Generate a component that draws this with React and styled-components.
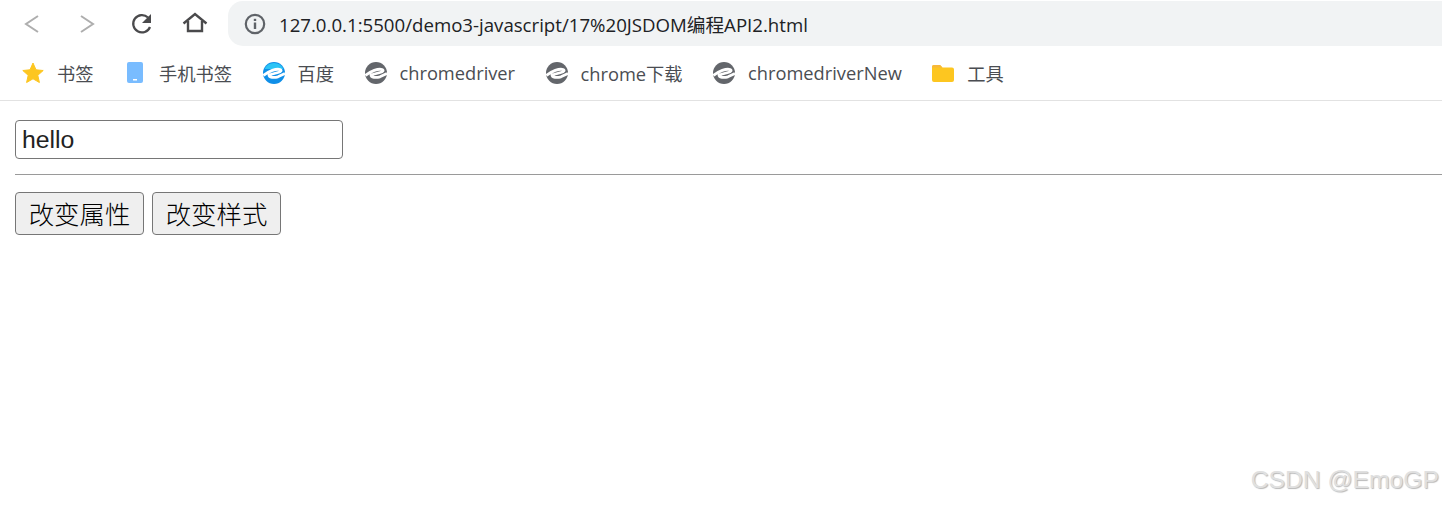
import React from "react";
import styled, { createGlobalStyle } from "styled-components";

const GlobalStyle = createGlobalStyle`
  html, body {
    margin: 0;
    padding: 0;
    background: #fff;
    overflow: hidden;
  }
`;

const Window = styled.div`
  width: 1442px;
  height: 506px;
  position: relative;
  overflow: hidden;
  background: #fff;
  display: flex;
  flex-direction: column;
`;

const Toolbar = styled.div`
  height: 46px;
  margin-top: 1px;
  display: flex;
  align-items: flex-start;
`;

const NavButtons = styled.div`
  width: 228px;
  height: 46px;
  flex-shrink: 0;
  display: flex;
  align-items: center;
`;

const NavIcon = styled.svg`
  width: 28px;
  height: 28px;
  margin-left: ${(p) => p.$left}px;
  flex-shrink: 0;
  fill: none;
  stroke: ${(p) => (p.$off ? "#aeaeae" : "#4a4a4c")};
  stroke-width: 2.4;
`;

const AddressBar = styled.div`
  flex: 1;
  height: 45px;
  background: #f1f3f4;
  border-radius: 15px 0 0 15px;
  display: flex;
  align-items: center;
  padding-left: 16px;
  gap: 13px;
`;

const Url = styled.span`
  font-family: "Open Sans", "Noto Sans CJK SC", sans-serif;
  font-size: 18.65px;
  color: #202124;
  white-space: nowrap;
`;

const BookmarkBar = styled.div`
  height: 54px;
  box-sizing: border-box;
  border-bottom: 1px solid #e2e2e2;
  display: flex;
  align-items: center;
  padding: 0 0 2px 22px;
  gap: 30.5px;
`;

const Bookmark = styled.div`
  display: flex;
  align-items: center;
  gap: 13px;
`;

const BookmarkIcon = styled.svg`
  width: 22px;
  height: 22px;
  flex-shrink: 0;
`;

const BookmarkLabel = styled.span`
  font-family: "Open Sans", "Noto Sans CJK SC", sans-serif;
  font-size: 18.25px;
  color: #4a4d52;
  white-space: nowrap;
`;

const Content = styled.div`
  padding: 19px 0 0 15px;
  display: flex;
  flex-direction: column;
`;

const TextInput = styled.input`
  box-sizing: border-box;
  width: 328px;
  height: 39px;
  padding: 0 6px;
  border: 1.5px solid #767676;
  border-radius: 4px;
  font-family: "Liberation Sans", Arial, sans-serif;
  font-size: 24.8px;
  color: #222;
  background: #fff;
  outline: none;
`;

const Rule = styled.hr`
  margin: 15px 0 17px;
  height: 1px;
  border: 0;
  background: #9a9a9a;
`;

const ButtonRow = styled.div`
  display: flex;
  gap: 8px;
`;

const ActionButton = styled.button`
  box-sizing: border-box;
  width: 129px;
  height: 43px;
  padding: 0 0 2px;
  border: 1.5px solid #767676;
  border-radius: 4px;
  background: #efefef;
  font-family: "Noto Sans CJK SC", sans-serif;
  font-size: 25.4px;
  font-weight: 300;
  color: #000;
`;

const Watermark = styled.div`
  position: absolute;
  right: 3px;
  bottom: 12px;
  font-family: "Liberation Sans", Arial, sans-serif;
  font-size: 24.7px;
  color: #e0e0e0;
  text-shadow: 1px 1px 1px #b8b8b8;
  white-space: nowrap;
`;

function Star() {
  return (
    <BookmarkIcon viewBox="0 0 22 22">
      <path
        d="M11 1l3 6.800 7.200.7-5.400 4.800 1.600 7.200L11 16.800l-6.400 3.700 1.600-7.200L.8 8.500 8 7.800z"
        fill="#fdc620"
        stroke="#fdc620"
        strokeLinejoin="round"
      />
    </BookmarkIcon>
  );
}

function Phone() {
  return (
    <BookmarkIcon viewBox="0 0 22 22">
      <rect x="3" y="0" width="16" height="21" rx="2" fill="#79bcff" />
      <rect x="9" y="17" width="4" height="1.5" fill="#fff" />
    </BookmarkIcon>
  );
}

function Edge({ color, light }) {
  return (
    <BookmarkIcon viewBox="0 0 22 22">
      <circle cx="11" cy="11" r="11" fill={color} />
      {light && <path d="M1.500 7a10.500 10.500 0 0 1 19 0z" fill="#2cc4f5" />}
      <path
        d="M0.500 13.500C6 9 13 6.500 17 7.500c2 .8 1 2.300-2 3L6 13c0 2.500 5 3 9 1.800l7-3.300"
        fill="none"
        stroke="#fff"
        strokeWidth="2.800"
      />
    </BookmarkIcon>
  );
}

function Folder() {
  return (
    <BookmarkIcon viewBox="0 0 22 22">
      <path d="M0 5a2 2 0 0 1 2-2h6l2.500 2.500H20a2 2 0 0 1 2 2V18a2 2 0 0 1-2 2H2a2 2 0 0 1-2-2z" fill="#fdc620" />
      <path d="M0 5a2 2 0 0 1 2-2h6l2.500 2.500H0z" fill="#f7b83a" />
    </BookmarkIcon>
  );
}

const bookmarks = [
  { label: "书签", icon: <Star /> },
  { label: "手机书签", icon: <Phone /> },
  { label: "百度", icon: <Edge color="#0f8fe8" light /> },
  { label: "chromedriver", icon: <Edge color="#63666b" /> },
  { label: "chrome下载", icon: <Edge color="#63666b" /> },
  { label: "chromedriverNew", icon: <Edge color="#63666b" /> },
  { label: "工具", icon: <Folder /> },
];

export default function App() {
  return (
    <Window>
      <GlobalStyle />
      <Toolbar>
        <NavButtons>
          <NavIcon $off $left={18} viewBox="0 0 28 28">
            <path d="M20 6l-12 8 12 8" strokeWidth="2" />
          </NavIcon>
          <NavIcon $off $left={27} viewBox="0 0 28 28">
            <path d="M8 6l12 8-12 8" strokeWidth="2" />
          </NavIcon>
          <NavIcon $left={27} viewBox="0 0 28 28">
            <path d="M20 7.500A8.700 8.700 0 1 0 22 17" strokeWidth="2.200" />
            <path d="M23 4v9h-9z" fill="#4a4a4c" stroke="none" />
          </NavIcon>
          <NavIcon $left={26} viewBox="0 0 28 28">
            <path d="M1.500 13.500L13 4l11.500 9.500" />
            <path d="M6 11v10h14V11" />
          </NavIcon>
        </NavButtons>
        <AddressBar>
          <svg width="22" height="22" viewBox="0 0 22 22" fill="none">
            <circle cx="11" cy="11" r="9.200" stroke="#5f6368" strokeWidth="2.200" />
            <rect x="9.800" y="9.500" width="2.400" height="6.500" fill="#5f6368" />
            <rect x="9.800" y="5.800" width="2.400" height="2.200" fill="#5f6368" />
          </svg>
          <Url>127.0.0.1:5500/demo3-javascript/17%20JSDOM编程API2.html</Url>
        </AddressBar>
      </Toolbar>
      <BookmarkBar>
        {bookmarks.map((b) => (
          <Bookmark key={b.label}>
            {b.icon}
            <BookmarkLabel>{b.label}</BookmarkLabel>
          </Bookmark>
        ))}
      </BookmarkBar>
      <Content>
        <div>
          <TextInput defaultValue="hello" />
        </div>
        <Rule />
        <ButtonRow>
          <ActionButton>改变属性</ActionButton>
          <ActionButton>改变样式</ActionButton>
        </ButtonRow>
      </Content>
      <Watermark>CSDN @EmoGP</Watermark>
    </Window>
  );
}
